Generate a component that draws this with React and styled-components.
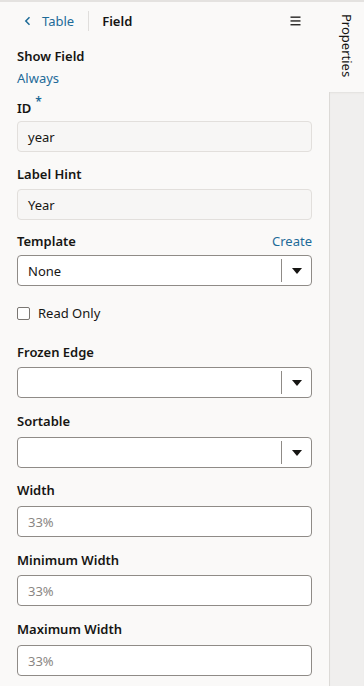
import React from 'react';
import styled, { createGlobalStyle } from 'styled-components';

const GlobalStyle = createGlobalStyle`
  html, body {
    margin: 0;
    padding: 0;
    background: #faf9f8;
  }
  body {
    font-family: "Noto Sans", "Open Sans", sans-serif;
    color: #161513;
  }
`;

const Page = styled.div`
  display: flex;
  width: 364px;
  height: 686px;
  border-top: 2px solid #e4e2e0;
  box-sizing: border-box;
  overflow: hidden;
`;

const Panel = styled.div`
  width: 329px;
  flex: none;
  display: flex;
  flex-direction: column;
  background: #faf9f8;
`;

const Header = styled.div`
  flex: none;
  display: flex;
  align-items: center;
  height: 38px;
  padding: 0 28px 0 23px;
`;

const BackLink = styled.span`
  display: flex;
  align-items: center;
  gap: 10px;
  color: #1e6b98;
  font-size: 13px;
  svg {
    width: 9px;
    height: 10px;
  }
`;

const Divider = styled.span`
  width: 1px;
  height: 20px;
  background: #e0dedc;
  margin: 0 13px 0 14px;
`;

const Title = styled.span`
  font-size: 13px;
  font-weight: 600;
  flex: 1;
`;

const Burger = styled.svg`
  width: 11px;
  height: 12px;
`;

const Body = styled.div`
  flex: none;
  padding: 7px 17px 0 17px;
  display: flex;
  flex-direction: column;
`;

const Field = styled.div`
  display: flex;
  flex-direction: column;
  margin-bottom: ${p => p.$mb ?? 14}px;
`;

const LabelRow = styled.div`
  display: flex;
  justify-content: space-between;
  align-items: center;
  height: 18px;
  margin-bottom: ${p => p.$gap ?? 6}px;
`;

const Label = styled.span`
  font-size: 13px;
  font-weight: 600;
  line-height: 18px;
`;

const Required = styled.sup`
  color: #1e6b98;
  font-size: 12px;
  margin-left: 4px;
  position: relative;
  top: -2px;
`;

const Link = styled.span`
  font-size: 13px;
  color: #1e6b98;
  line-height: 18px;
`;

const Value = styled.span`
  font-size: 13px;
  color: #1e6b98;
  line-height: 18px;
  margin-top: 4px;
`;

const Box = styled.div`
  display: flex;
  align-items: center;
  height: 31px;
  box-sizing: border-box;
  border-radius: 4px;
  border: 1px solid ${p => (p.$readonly ? '#e2dfdc' : '#8f8b87')};
  background: ${p => (p.$readonly ? '#f7f6f5' : '#ffffff')};
  font-size: 13px;
  padding-left: 10px;
  color: ${p => (p.$placeholder ? '#8a8683' : '#161513')};
`;

const BoxText = styled.span`
  flex: 1;
`;

const Arrow = styled.span`
  display: flex;
  align-items: center;
  justify-content: center;
  width: 29px;
  height: 23px;
  border-left: 1px solid #8f8b87;
`;

const CheckRow = styled.label`
  display: flex;
  align-items: center;
  gap: 8px;
  font-size: 13px;
  height: 18px;
  margin: 0 0 21px 0;
`;

const CheckBox = styled.span`
  width: 11px;
  height: 11px;
  border: 1px solid #7a7672;
  border-radius: 2px;
  background: #fff;
`;

const Side = styled.div`
  flex: 1;
  display: flex;
  flex-direction: column;
`;

const Tab = styled.div`
  height: 90px;
  background: #faf9f8;
  display: flex;
  justify-content: center;
  padding-top: 12px;
  box-sizing: border-box;
`;

const TabText = styled.span`
  writing-mode: vertical-rl;
  font-size: 13px;
  color: #161513;
`;

const Strip = styled.div`
  flex: 1;
  background: #f0efee;
  border-left: 1px solid #dcdad7;
  box-shadow: inset 0 2px 2px -1px #e2e0de;
`;

const Caret = () => (
  <svg width="10" height="6" viewBox="0 0 10 6">
    <path d="M0 0h10L5 6z" fill="#161513" />
  </svg>
);

const Select = ({ value }) => (
  <Box>
    <BoxText>{value}</BoxText>
    <Arrow>
      <Caret />
    </Arrow>
  </Box>
);

const App = () => (
  <Page>
    <GlobalStyle />
    <Panel>
      <Header>
        <BackLink>
          <svg viewBox="0 0 9 10">
            <path d="M6.5 1.2L2.8 5l3.7 3.8" stroke="#1e6b98" strokeWidth="1.5" fill="none" />
          </svg>
          Table
        </BackLink>
        <Divider />
        <Title>Field</Title>
        <Burger viewBox="0 0 11 12">
          <rect x="0.5" y="1.5" width="10" height="1.3" fill="#161513" />
          <rect x="0.5" y="5.3" width="10" height="1.3" fill="#161513" />
          <rect x="0.5" y="9.1" width="10" height="1.3" fill="#161513" />
        </Burger>
      </Header>
      <Body>
        <Field $mb={10}>
          <Label>Show Field</Label>
          <Value>Always</Value>
        </Field>
        <Field $mb={13}>
          <LabelRow $gap={6}>
            <Label>
              ID<Required>*</Required>
            </Label>
          </LabelRow>
          <Box $readonly>year</Box>
        </Field>
        <Field $mb={12}>
          <LabelRow $gap={6}>
            <Label>Label Hint</Label>
          </LabelRow>
          <Box $readonly>Year</Box>
        </Field>
        <Field $mb={18}>
          <LabelRow $gap={5}>
            <Label>Template</Label>
            <Link>Create</Link>
          </LabelRow>
          <Select value="None" />
        </Field>
        <CheckRow>
          <CheckBox />
          Read Only
        </CheckRow>
        <Field $mb={14}>
          <LabelRow $gap={6}>
            <Label>Frozen Edge</Label>
          </LabelRow>
          <Select value="" />
        </Field>
        <Field $mb={13}>
          <LabelRow $gap={7}>
            <Label>Sortable</Label>
          </LabelRow>
          <Select value="" />
        </Field>
        <Field>
          <LabelRow $gap={7}>
            <Label>Width</Label>
          </LabelRow>
          <Box $placeholder>33%</Box>
        </Field>
        <Field $mb={14}>
          <LabelRow $gap={6}>
            <Label>Minimum Width</Label>
          </LabelRow>
          <Box $placeholder>33%</Box>
        </Field>
        <Field $mb={0}>
          <LabelRow $gap={7}>
            <Label>Maximum Width</Label>
          </LabelRow>
          <Box $placeholder>33%</Box>
        </Field>
      </Body>
    </Panel>
    <Side>
      <Tab>
        <TabText>Properties</TabText>
      </Tab>
      <Strip />
    </Side>
  </Page>
);

export default App;
